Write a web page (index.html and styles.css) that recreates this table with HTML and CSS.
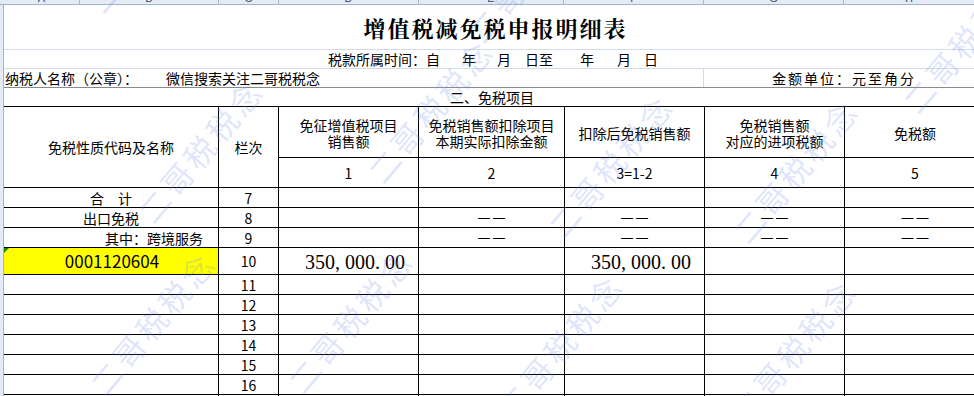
FILE: index.html
```html
<!DOCTYPE html>
<html lang="zh-CN">
<head>
<meta charset="utf-8">
<title>增值税减免税申报明细表</title>
<link rel="stylesheet" href="styles.css">
</head>
<body>
<div class="colhdr">
  <div class="ch ch-a"><span>A</span></div>
  <div class="ch ch-b"><span>B</span></div>
  <div class="ch ch-c"><span>C</span></div>
  <div class="ch ch-d"><span>D</span></div>
  <div class="ch ch-e"><span>E</span></div>
  <div class="ch ch-f"><span>F</span></div>
  <div class="ch ch-g"><span>G</span></div>
  <div class="ch ch-h"><span>H</span></div>
</div>
<div class="sheet">
  <div class="rowhdr"></div>
  <div class="content">
    <div class="title">增值税减免税申报明细表</div>
    <div class="period">税款所属时间：自<span class="g22">年</span><span class="g21">月</span><span class="g14">日至</span><span class="g27">年</span><span class="g23">月</span><span class="g13">日</span></div>
    <div class="taxpayer">
      <div class="tp-left">纳税人名称（公章）：<span class="tp-name">微信搜索关注二哥税税念</span></div>
      <div class="tp-right">金额单位：元至角分</div>
    </div>
    <div class="section">二、免税项目</div>
    <div class="tbl">
      <div class="c span2">免税性质代码及名称</div>
      <div class="c span2">栏次</div>
      <div class="c hd"><span class="ln">免征增值税项目</span><span class="ln">销售额</span></div>
      <div class="c hd"><span class="ln">免税销售额扣除项目</span><span class="ln">本期实际扣除金额</span></div>
      <div class="c hd">扣除后免税销售额</div>
      <div class="c hd"><span class="ln">免税销售额</span><span class="ln">对应的进项税额</span></div>
      <div class="c hd">免税额</div>
      <div class="c num">1</div>
      <div class="c num">2</div>
      <div class="c num">3=1-2</div>
      <div class="c num">4</div>
      <div class="c num">5</div>

      <div class="c">合　计</div><div class="c">7</div><div class="c"></div><div class="c"></div><div class="c"></div><div class="c"></div><div class="c"></div>
      <div class="c">出口免税</div><div class="c">8</div><div class="c"></div><div class="c dash">——</div><div class="c dash">——</div><div class="c dash">——</div><div class="c dash">——</div>
      <div class="c right">其中：跨境服务</div><div class="c">9</div><div class="c"></div><div class="c dash">——</div><div class="c dash">——</div><div class="c dash">——</div><div class="c dash">——</div>
      <div class="c yellow code">0001120604</div><div class="c">10</div><div class="c money">350<span class="p">,</span>000<span class="p">.</span>00</div><div class="c"></div><div class="c money">350<span class="p">,</span>000<span class="p">.</span>00</div><div class="c"></div><div class="c"></div>
      <div class="c"></div><div class="c">11</div><div class="c"></div><div class="c"></div><div class="c"></div><div class="c"></div><div class="c"></div>
      <div class="c"></div><div class="c">12</div><div class="c"></div><div class="c"></div><div class="c"></div><div class="c"></div><div class="c"></div>
      <div class="c"></div><div class="c">13</div><div class="c"></div><div class="c"></div><div class="c"></div><div class="c"></div><div class="c"></div>
      <div class="c"></div><div class="c">14</div><div class="c"></div><div class="c"></div><div class="c"></div><div class="c"></div><div class="c"></div>
      <div class="c"></div><div class="c">15</div><div class="c"></div><div class="c"></div><div class="c"></div><div class="c"></div><div class="c"></div>
      <div class="c"></div><div class="c">16</div><div class="c"></div><div class="c"></div><div class="c"></div><div class="c"></div><div class="c"></div>
      <div class="c"></div><div class="c">17</div><div class="c"></div><div class="c"></div><div class="c"></div><div class="c"></div><div class="c"></div>
    </div>
  </div>
</div>
<div class="wm-layer" aria-hidden="true">
  <span class="wm wm1">二哥税税念</span>
  <span class="wm wm2">二哥税税念</span>
  <span class="wm wm3">二哥税税念</span>
  <span class="wm wm4">二哥税税念</span>
  <span class="wm wm5">二哥税税念</span>
  <span class="wm wm6">二哥税税念</span>
  <span class="wm wm7">二哥税税念</span>
  <span class="wm wm8">二哥税税念</span>
  <span class="wm wm9">二哥税税念</span>
  <span class="wm wm10">二哥税税念</span>
  <span class="wm wm11">二哥税税念</span>
</div>
</body>
</html>
```
FILE: styles.css
```css
* { box-sizing: border-box; margin: 0; padding: 0; }
html, body { width: 974px; height: 396px; overflow: hidden; background: #fff; }
body {
  position: relative;
  font-family: "Noto Sans CJK SC", "Noto Sans", sans-serif;
  font-size: 14px;
  color: #000;
}

/* Excel column header strip (mostly cut off) */
.colhdr {
  display: flex;
  height: 5px;
  padding-left: 4px;
  background: #e4ebf5;
  border-bottom: 1px solid #9fb4cf;
  overflow: hidden;
}
.ch {
  border-right: 1px solid #a9bbd3;
  text-align: center;
  overflow: hidden;
  font-family: "Liberation Sans", sans-serif;
  font-size: 11px;
  color: #3a4a5e;
}
.ch span { display: block; line-height: 12px; margin-top: -8px; }
.ch-a { width: 76px; }
.ch-b { width: 139px; }
.ch-c { width: 60px; }
.ch-d { width: 140px; }
.ch-e { width: 145px; }
.ch-f { width: 140px; }
.ch-g { width: 140px; }
.ch-h { flex: 1; border-right: 0; }

.sheet { display: flex; }
.rowhdr {
  width: 4px;
  flex: none;
  background: #e4ebf5;
  border-right: 1px solid #9fb4cf;
}
.content { width: 981px; flex: none; }

.title {
  height: 45px;
  border-bottom: 1px solid #d4dbe8;
  display: flex;
  align-items: center;
  justify-content: center;
  padding-left: 2px;
  font-family: "Noto Serif CJK SC", "Noto Sans CJK SC", serif;
  font-weight: 700;
  font-size: 22px;
  letter-spacing: 2px;
}

.period {
  height: 19px;
  border-bottom: 1px solid #d4dbe8;
  padding-left: 324px;
  line-height: 18px;
  white-space: nowrap;
}
.g22 { margin-left: 22px; }
.g21 { margin-left: 21px; }
.g14 { margin-left: 14px; }
.g27 { margin-left: 27px; }
.g23 { margin-left: 23px; }
.g13 { margin-left: 13px; }

.taxpayer {
  height: 19px;
  border-bottom: 1px solid #8a8a8a;
  display: flex;
  line-height: 18px;
  white-space: nowrap;
}
.tp-left {
  width: 700px;
  border-right: 1px solid #d4dbe8;
  padding-left: 1px;
}
.tp-name { margin-left: 28px; }
.tp-right { flex: 1; padding-left: 68px; letter-spacing: 2px; }

.section {
  height: 18px;
  line-height: 18px;
  text-align: center;
  padding-right: 5px;
}

.tbl {
  display: grid;
  grid-template-columns: 214px 59px 139px 145px 139px 139px 140px;
  grid-template-rows: 50px 29px 19px 19px 19px 26px repeat(7, 19px);
  gap: 1px;
  background: #000;
  border-top: 1px solid #000;
}
.c {
  background: #fff;
  display: flex;
  align-items: center;
  justify-content: center;
  text-align: center;
  line-height: 16px;
  white-space: nowrap;
}
.span2 { grid-row: span 2; }
.hd { flex-direction: column; padding-top: 2px; }
.ln { display: block; height: 16px; }
.right { justify-content: flex-end; padding-right: 15px; }
.dash {
  font-family: "Liberation Sans", sans-serif;
  font-size: 12px;
  letter-spacing: 3px;
  padding-left: 3px;
}
.yellow { background: #ffff00; position: relative; }
.yellow::before {
  content: "";
  position: absolute;
  left: 0;
  top: 0;
  border-top: 5px solid #1a8a1a;
  border-right: 5px solid transparent;
}
.code { font-size: 17px; padding-left: 2px; }
.money {
  justify-content: flex-end;
  padding-right: 13px;
  font-family: "Liberation Serif", serif;
  font-size: 20px;
  padding-top: 2px;
}
.money .p { margin-right: 5px; }

/* diagonal watermark overlay */
.wm-layer {
  position: absolute;
  left: 0;
  top: 0;
  width: 974px;
  height: 396px;
  overflow: hidden;
  pointer-events: none;
}
.wm {
  position: absolute;
  font-family: "Noto Sans CJK SC", sans-serif;
  font-size: 31px;
  letter-spacing: 4px;
  line-height: 1;
  white-space: nowrap;
  color: rgba(110, 140, 235, 0.24);
  transform: translate(-50%, -50%) rotate(-50deg);
}
.wm1 { left: 200px; top: 150px; }
.wm2 { left: 430px; top: 110px; }
.wm3 { left: 610px; top: 165px; }
.wm4 { left: 795px; top: 170px; }
.wm5 { left: 965px; top: 40px; }
.wm6 { left: 152px; top: 322px; }
.wm7 { left: 350px; top: 320px; }
.wm8 { left: 560px; top: 345px; }
.wm9 { left: 793px; top: 350px; }
.wm10 { left: 530px; top: -30px; }
.wm11 { left: 150px; top: -60px; }
```
